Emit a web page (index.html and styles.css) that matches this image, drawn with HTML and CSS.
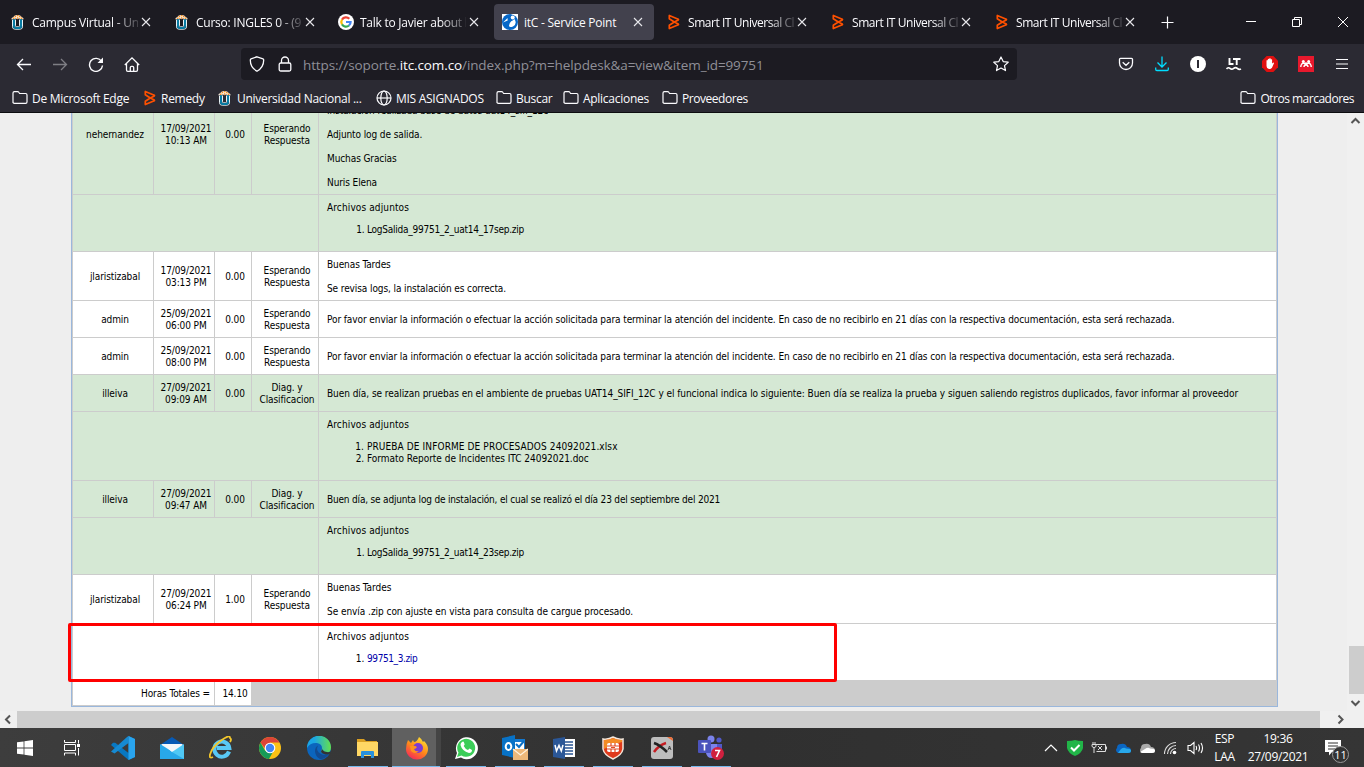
FILE: index.html
```html
<!DOCTYPE html>
<html lang="es">
<head>
<meta charset="utf-8">
<title>itC - Service Point</title>
<link rel="stylesheet" href="styles.css">
</head>
<body>
<svg class="defs" width="0" height="0">
  <symbol id="unad" viewBox="0 0 16 16"><path d="M2.500 5.500v7.300q0 2.400 2.700 2.400h4.600q2.700 0 2.700-2.400V5.500M5.500 5.500v6.300q0 1 1 1h2q1 0 1-1V5.500" fill="none" stroke="#e8f3f7"/><path d="M4 5v7.300q0 1.700 1.800 1.700h3.400q1.800 0 1.800-1.700V5" fill="none" stroke="#087ba3" stroke-width="2"/><path d="M1.300 5.600q0-1.800 1.700-2.300Q4.500 1 7.500 1T12 3.300q1.700.5 1.700 2.300-1.500-1.500-3-.4-1.500-1.200-3.200 0-1.700-1.200-3.200 0-1.500-1.100-3 .4z" fill="#fff1df"/><path d="M3 4.300h1.500M4.700 2.500h1.500M7 1.600h1.500M9 2.600h1.500M10.700 4.300h1.500M7 4h1.300" stroke="#f28a1e" stroke-width="1.400"/></symbol>
  <symbol id="bmc" viewBox="0 0 16 16"><path d="M3.300 1.500v3.200L8.300 8 12.300 6q.4-.4 0-.8zM3.300 14.500v-3.200L8.300 8l4 2q.4.400 0 .8z" fill="none" stroke="#fe5000" stroke-width="1.700" stroke-linejoin="round"/></symbol>
  <symbol id="folder" viewBox="0 0 16 16"><path d="M1 13V3q0-1.400 1.400-1.400h3.200q.8 0 1.200.7L7.600 3.500h6q1.400 0 1.400 1.400V12q0 1.400-1.400 1.400H2.400Q1 13.400 1 12z" fill="none" stroke="#fbfbfe" stroke-width="1.200"/></symbol>
  <symbol id="x" viewBox="0 0 16 16"><path d="M4 4l8 8M12 4l-8 8" stroke="#e8e8ec" stroke-width="1.100"/></symbol>
</svg>

<header class="tabs">
  <div class="tab"><svg class="i16"><use href="#unad"/></svg><span class="label">Campus Virtual - Un</span><svg class="i16 close"><use href="#x"/></svg></div>
  <div class="tab"><svg class="i16"><use href="#unad"/></svg><span class="label">Curso: INGLES 0 - (9</span><svg class="i16 close"><use href="#x"/></svg></div>
  <div class="tab"><svg class="i16" viewBox="0 0 16 16"><circle cx="8" cy="8" r="8" fill="#fff"/><g fill="none" stroke-width="2.200"><path d="M4 5.600A4.600 4.600 0 0 1 11.300 4.800" stroke="#ea4335"/><path d="M4 10.400A4.600 4.600 0 0 1 4 5.600" stroke="#fbbc05"/><path d="M4 10.400A4.600 4.600 0 0 0 11 11.500" stroke="#34a853"/><path d="M8 8h4.600q0 2-1.600 3.500" stroke="#4285f4"/></g></svg><span class="label">Talk to Javier about h</span><svg class="i16 close"><use href="#x"/></svg></div>
  <div class="tab active"><svg class="i16" viewBox="0 0 16 16"><path fill="#fff" d="M0 0h16v16H0z"/><circle cx="8" cy="8" r="8" fill="#0768c8"/><circle cx="10.700" cy="3.500" r="2" fill="#fff"/><path d="M12.500 5q3 5-1.500 7.500-4 1.500-4-1 0-2 2.200-4.200Q10.500 6.700 12.500 5zM5.500 4L1 8.500 5.700 6.500z" fill="#fff"/><path d="M9 0h7v3z" fill="#fff"/></svg><span class="label">itC - Service Point</span><svg class="i16 close"><use href="#x"/></svg></div>
  <div class="tab"><svg class="i16"><use href="#bmc"/></svg><span class="label smart">Smart IT Universal Cl</span><svg class="i16 close"><use href="#x"/></svg></div>
  <div class="tab"><svg class="i16"><use href="#bmc"/></svg><span class="label smart">Smart IT Universal Cl</span><svg class="i16 close"><use href="#x"/></svg></div>
  <div class="tab"><svg class="i16"><use href="#bmc"/></svg><span class="label smart">Smart IT Universal Cl</span><svg class="i16 close"><use href="#x"/></svg></div>
  <svg class="newtab" width="16" height="16" viewBox="0 0 16 16"><path d="M8.500 2.500v12M2.500 8.500h12" stroke="#fbfbfe" stroke-width="1.200"/></svg>
  <div class="winbtns">
    <svg width="46" height="44"><path d="M20 21.500h10" stroke="#fff"/></svg>
    <svg width="46" height="44"><path d="M20.500 19.500h7v7h-7zM22.500 19v-1.500h7v7H28" fill="none" stroke="#fff"/></svg>
    <svg width="46" height="44"><path d="M20 17l10 10M30 17L20 27" stroke="#fff"/></svg>
  </div>
</header>

<nav class="toolbar">
  <div class="nav">
    <svg class="i16" viewBox="0 0 16 16"><path d="M15 8.500H1.500M7 3L1.500 8.500 7 14" fill="none" stroke="#fbfbfe" stroke-width="1.300"/></svg>
    <svg class="i16 dim" viewBox="0 0 16 16"><path d="M1 8.500h13.500M9 3l5.500 5.500L9 14" fill="none" stroke="#fbfbfe" stroke-width="1.300"/></svg>
    <svg class="i16" viewBox="0 0 16 16"><path d="M13.600 5.500A6.500 6.500 0 1 0 14.500 9.500" fill="none" stroke="#fbfbfe" stroke-width="1.400"/><path d="M15 1.500V7H9.500z" fill="#fbfbfe"/></svg>
    <svg class="i16" viewBox="0 0 16 16"><path d="M.8 9L8 1.800 15.200 9M2.500 7.500V14q0 1.300 1.300 1.300h8.400q1.300 0 1.300-1.300V7.500M6.300 15v-3.500q0-1.200 1.200-1.200h1q1.200 0 1.200 1.200V15" fill="none" stroke="#fbfbfe" stroke-width="1.300"/></svg>
  </div>
  <div class="url">
    <svg class="i16" viewBox="0 0 16 16"><path d="M8 .8l6 2q.7.300.7 1.200 0 7.500-6.700 11.200Q1.300 11.500 1.300 4q0-.9.700-1.200z" fill="none" stroke="#fbfbfe" stroke-width="1.300"/></svg>
    <svg class="i16 lock" viewBox="0 0 16 16"><rect x="2.200" y="7" width="11.600" height="8" rx="1.500" fill="none" stroke="#fbfbfe" stroke-width="1.300"/><path d="M4.500 7V4.500a3.500 3.500 0 0 1 7 0V7" fill="none" stroke="#fbfbfe" stroke-width="1.300"/></svg>
    <span class="address">https://soporte.<b>itc.com.co</b>/index.php?m=helpdesk&amp;a=view&amp;item_id=99751</span>
    <svg class="i16 star" viewBox="0 0 16 16"><path d="M8 1l2.200 4.600 5 .6-3.700 3.400 1 5L8 12.100 3.500 14.600l1-5L.8 6.200l5-.6z" fill="none" stroke="#fbfbfe" stroke-width="1.200" stroke-linejoin="round"/></svg>
  </div>
  <div class="ext">
    <svg class="i16" viewBox="0 0 16 16"><path d="M1.500 3.300q0-1 1-1h11q1 0 1 1V7a6.500 6.500 0 0 1-13 0zM4.700 6.300L8 9.300l3.300-3" fill="none" stroke="#fbfbfe" stroke-width="1.300"/></svg>
    <svg class="i16" viewBox="0 0 16 16"><path d="M8 .5v10.500M3.500 6.500L8 11l4.500-4.500M1.700 11.500v1.800q0 1.200 1.200 1.200h10.200q1.200 0 1.200-1.200v-1.800" fill="none" stroke="#00ddff" stroke-width="1.300"/></svg>
    <svg class="i16" viewBox="0 0 16 16"><circle cx="8" cy="8" r="8" fill="#fff"/><path d="M8 4v8" stroke="#2b2a33" stroke-width="2"/></svg>
    <svg class="i16" viewBox="0 0 16 16"><path d="M3.500 2v6H7.500M7 3h7.500M10.700 3v6" fill="none" stroke="#fff" stroke-width="1.900"/><path d="M.5 13q1.700-2.200 3.500-.6t3.700 0 3.600 0 3.700.6" fill="none" stroke="#fff" stroke-width="1.700"/></svg>
    <svg class="i16" viewBox="0 0 16 16"><path d="M4.700 0h6.600L16 4.700v6.600L11.300 16H4.700L0 11.300V4.700z" fill="#e01010"/><path d="M4.500 8V4.500q.8-.9 1.300 0V3.300q.8-.9 1.400 0v-.7q.8-.8 1.500 0v1q.8-.8 1.400 0v4l1-.9q1-.3 1 .4l-2.100 4.700q-1 1.400-3 1.200-2.500-.3-2.500-3z" fill="#fff"/></svg>
    <svg class="i16" viewBox="0 0 16 16"><path fill="#e8192d" d="M0 0h16v16H0z"/><path d="M2.800 11q0-1.500.6-2.500Q4 7.300 5.300 7L8 8l2.700-1q1.300.3 1.900 1.500.6 1 .6 2.500M6 11q0-2 2-2t2 2" fill="none" stroke="#fff" stroke-width="1.400"/><circle cx="5.300" cy="5.500" r="1.500" fill="#fff"/><circle cx="10.700" cy="5.500" r="1.500" fill="#fff"/><circle cx="8" cy="7.700" r="1.500" fill="#fff"/></svg>
    <svg class="i16" viewBox="0 0 16 16"><path d="M2 3.500h12M2 8h12M2 12.500h12" stroke="#fbfbfe" stroke-width="1.200"/></svg>
  </div>
</nav>

<nav class="bookmarks">
  <div class="bm w131"><svg class="i16"><use href="#folder"/></svg><span>De Microsoft Edge</span></div>
  <div class="bm w76"><svg class="i16"><use href="#bmc"/></svg><span>Remedy</span></div>
  <div class="bm w159"><svg class="i16"><use href="#unad"/></svg><span class="uni">Universidad Nacional ...</span></div>
  <div class="bm w120"><svg class="i16" viewBox="0 0 16 16"><g fill="none" stroke="#fbfbfe" stroke-width="1.200"><circle cx="8" cy="8" r="7"/><ellipse cx="8" cy="8" rx="3.200" ry="7"/><path d="M1 8h14"/></g></svg><span class="mis">MIS ASIGNADOS</span></div>
  <div class="bm w67"><svg class="i16"><use href="#folder"/></svg><span>Buscar</span></div>
  <div class="bm w99"><svg class="i16"><use href="#folder"/></svg><span>Aplicaciones</span></div>
  <div class="bm"><svg class="i16"><use href="#folder"/></svg><span class="tight">Proveedores</span></div>
  <div class="bm last"><svg class="i16"><use href="#folder"/></svg><span class="tighter">Otros marcadores</span></div>
</nav>

<main class="view">
  <div class="page">
    <div class="log">
      <div class="row green first"><div>nehernandez</div><div>17/09/2021<br>10:13 AM</div><div>0.00</div><div>Esperando<br>Respuesta</div><div class="msg">Instalacion realizada base de datos uat14_sifi_12c<br><br>Adjunto log de salida.<br><br>Muchas Gracias<br><br>Nuris Elena</div></div>
      <div class="row files green h56"><div></div><div class="att"><span class="head">Archivos adjuntos</span><ol><li class="log-name">LogSalida_99751_2_uat14_17sep.zip</li></ol></div></div>
      <div class="row h48"><div>jlaristizabal</div><div>17/09/2021<br>03:13 PM</div><div>0.00</div><div>Esperando<br>Respuesta</div><div class="msg">Buenas Tardes<br><br>Se revisa logs, la instalación es correcta.</div></div>
      <div class="row h36"><div>admin</div><div>25/09/2021<br>06:00 PM</div><div>0.00</div><div>Esperando<br>Respuesta</div><div class="msg notice">Por favor enviar la información o efectuar la acción solicitada para terminar la atención del incidente. En caso de no recibirlo en 21 días con la respectiva documentación, esta será rechazada.</div></div>
      <div class="row h36"><div>admin</div><div>25/09/2021<br>08:00 PM</div><div>0.00</div><div>Esperando<br>Respuesta</div><div class="msg notice">Por favor enviar la información o efectuar la acción solicitada para terminar la atención del incidente. En caso de no recibirlo en 21 días con la respectiva documentación, esta será rechazada.</div></div>
      <div class="row green h36"><div>illeiva</div><div>27/09/2021<br>09:09 AM</div><div>0.00</div><div>Diag. y<br>Clasificacion</div><div class="msg report">Buen día, se realizan pruebas en el ambiente de pruebas UAT14_SIFI_12C y el funcional indica lo siguiente: Buen día se realiza la prueba y siguen saliendo registros duplicados, favor informar al proveedor</div></div>
      <div class="row files green h68"><div></div><div class="att"><span class="head">Archivos adjuntos</span><ol><li class="caps">PRUEBA DE INFORME DE PROCESADOS 24092021.xlsx</li><li class="doc">Formato Reporte de Incidentes ITC 24092021.doc</li></ol></div></div>
      <div class="row green h36"><div>illeiva</div><div>27/09/2021<br>09:47 AM</div><div>0.00</div><div>Diag. y<br>Clasificacion</div><div class="msg install">Buen día, se adjunta log de instalación, el cual se realizó el día 23 del septiembre del 2021</div></div>
      <div class="row files green h56"><div></div><div class="att"><span class="head">Archivos adjuntos</span><ol><li class="log-name">LogSalida_99751_2_uat14_23sep.zip</li></ol></div></div>
      <div class="row h48"><div>jlaristizabal</div><div>27/09/2021<br>06:24 PM</div><div>1.00</div><div>Esperando<br>Respuesta</div><div class="msg sent">Buenas Tardes<br><br>Se envía .zip con ajuste en vista para consulta de cargue procesado.</div></div>
      <div class="row files h56"><div></div><div class="att"><span class="head">Archivos adjuntos</span><ol><li><a>99751_3.zip</a></li></ol></div></div>
      <div class="row total"><div>Horas Totales =</div><div>14.10</div></div>
    </div>
    <div class="mark"></div>
  </div>
  <div class="vscroll"><svg width="17" height="17"><path d="M4.500 10L8.500 6l4 4" fill="none" stroke="#555" stroke-width="2"/></svg><i></i><svg width="17" height="17"><path d="M4.500 7l4 4 4-4" fill="none" stroke="#555" stroke-width="2"/></svg></div>
  <div class="hscroll"><svg width="17" height="17"><path d="M10 4.500L6 8.500l4 4" fill="none" stroke="#555" stroke-width="2"/></svg><i></i><svg width="44" height="17"><path d="M18.500 4.500l4 4-4 4" fill="none" stroke="#555" stroke-width="2"/></svg></div>
</main>

<footer class="taskbar">
  <div class="app"><svg width="16" height="16" viewBox="0 0 16 16"><path d="M0 2.300l6.600-.9v6.200H0zM7.400 1.300L16 0v7.600H7.400zM0 8.400h6.600v6.200L0 13.700zM7.400 8.400H16V16l-8.600-1.300z" fill="#fff"/></svg></div>
  <div class="app view-btn"><svg width="16" height="16" viewBox="0 0 16 16"><path d="M.5 0v2.500h11V0M.5 15.500V13h11v2.500M.5 4.500h11v6H.500zM14.500 0v3.500M14.500 8v7.500" fill="none" stroke="#fff"/><path d="M13 4h3v3h-3z" fill="#fff"/></svg></div>
  <div class="app"><svg width="24" height="24" viewBox="0 0 24 24"><path d="M17.500 0L24 3v18l-6.500 3L0 9l2-2.200 2.200-.1L17.500 17z" fill="#0878c2"/><path d="M17.500 0v7L3.500 17.500 0 15.500 16 1z" fill="#168ad2"/><path d="M17.500 0L24 3v18l-6.500 3z" fill="#29a4ee"/></svg></div>
  <div class="app"><svg width="24" height="24" viewBox="0 0 24 24"><path d="M0 9L12 1l12 8v14H0z" fill="#075ab5"/><path d="M1.500 8h21v10h-21z" fill="#f4f7fa"/><path d="M0 9l12 8 12-8v14H0z" fill="#35b3ee"/><path d="M0 8v15h24z" fill="#28a8ea"/><path d="M3 8h18l-9 8z" fill="#f4f7fa"/><path d="M24 8v15L12 16z" fill="#50c8f5"/></svg></div>
  <div class="app"><svg width="24" height="24" viewBox="0 0 24 24"><path d="M20 15.500A7.500 7.500 0 1 1 20.300 12H8" fill="none" stroke="#59c9f5" stroke-width="4"/><path d="M4 21q-4 2-3-2.500Q3 11 12 4.500T21 2q2 1 0 4" fill="none" stroke="#f3c72b" stroke-width="1.800"/></svg></div>
  <div class="app"><svg width="24" height="24" viewBox="0 0 24 24"><circle cx="12" cy="12" r="11" fill="#fbc116"/><path d="M2.500 6.500A11 11 0 0 1 21.500 6.500H12L8 14z" fill="#dc4437"/><path d="M2.500 6.500A11 11 0 0 0 11 23l5-9-4 2.500-5-2z" fill="#169b58"/><circle cx="12" cy="12" r="5.300" fill="#fff"/><circle cx="12" cy="12" r="4.200" fill="#4285f4"/></svg></div>
  <div class="app"><svg width="24" height="24" viewBox="0 0 24 24"><defs><linearGradient id="eg"><stop offset=".3" stop-color="#1ba6e4"/><stop offset="1" stop-color="#64e04d"/></linearGradient></defs><circle cx="12" cy="12" r="12" fill="#0b65bd"/><path d="M0 12A12 12 0 0 1 24 11.500Q24 17 18 17q-4 0-4-1.500c0-1 1-1 1-3.500q0-4-5-5Q3 6.500 0 12z" fill="url(#eg)"/><path d="M11 9.500Q8 15 14 18q4 2 8 0-4 5.500-9 5-5-3-5-8 0-4 3-5.500z" fill="#124b91"/><path d="M14 15.500c0-1 1-1 1-3 0 2 5 5 9 3l-1.500 2.500q-3 1-5.500 0-3-1-3-2.500z" fill="#333"/></svg></div>
  <div class="app run"><svg width="24" height="24" viewBox="0 0 24 24"><path d="M1 3h7l2 2h11v6H1z" fill="#dba022"/><path d="M1 6h21v14H1z" fill="#ffd764"/><path d="M5 22v-6q0-1 1-1h11q1 0 1 1v6h-3v-3H8v3z" fill="#2991dd"/></svg></div>
  <div class="app run on"><svg width="24" height="24" viewBox="0 0 24 24"><defs><linearGradient id="ff" x1=".8" y1="0" x2=".2" y2="1"><stop offset="0" stop-color="#ffe635"/><stop offset=".5" stop-color="#ff8a18"/><stop offset="1" stop-color="#f4215f"/></linearGradient></defs><path d="M3 4l3 3 2-3 1 2q3 0 5-5 3 2 4 5l1-1q4 4 4 8a11 10.500 0 0 1-22 0q0-5 2-9z" fill="url(#ff)"/><circle cx="13" cy="12" r="5" fill="#7d3bd2"/><path d="M5 10q5-1 7 1-1 2-3 2 1 3 5 2-4 4-8 0z" fill="#ff921e"/></svg></div>
  <div class="app run"><svg width="24" height="24" viewBox="0 0 24 24"><path d="M1 23l2-6a11 11 0 1 1 4 4.500z" fill="#fff"/><path d="M3 21l1.500-4.500a9 9 0 1 1 3 3z" fill="#3bcd58"/><path d="M8 6q1.500-1 2 .5l.7 2-1 1.500q1.500 3 4.300 4l1.500-1.500 2.500 1.500q0 3-3 3-7-2-8.500-8Q6.500 7 8 6z" fill="#fff"/></svg></div>
  <div class="app run"><svg width="26" height="26" viewBox="0 0 26 26"><path d="M12 4h11v14H12z" fill="#1478ce"/><path d="M13 7h9v8h-9z" fill="#fff"/><path d="M14 9l3 3 5-6" stroke="#0b6fc4" stroke-width="2" fill="none"/><path d="M0 3l13-3v23L0 20z" fill="#0872c6"/><ellipse cx="6.500" cy="11.500" rx="2.800" ry="3.500" fill="none" stroke="#fff" stroke-width="2"/><path d="M11 14h15v11H11z" fill="#edb879"/><path d="M11 14l7.500 6 7.500-6" fill="none" stroke="#fff3df" stroke-width="1.200"/></svg></div>
  <div class="app run"><svg width="24" height="24" viewBox="0 0 24 24"><path d="M11 3h12v18H11z" fill="#fff"/><path d="M13 6h8m-8 3h8m-8 3h8m-8 3h8m-8 3h8" stroke="#285493" stroke-width="1.300"/><path d="M1 3l12-2v22L1 21z" fill="#2b5797"/><path d="M3 9l1.500 6L7 9.500 9.300 15 11 9" stroke="#fff" stroke-width="1.500" fill="none"/></svg></div>
  <div class="app run"><svg width="24" height="24" viewBox="0 0 24 24"><path d="M2 3q5 1 10-2 5 3 10 2v10q-1 6-10 10Q3 19 2 13z" fill="#df3a1c" stroke="#f4e8dc" stroke-width="1.500"/><path d="M3 4q5 0 9-2 4 2 9 2v2Q12 8 3 13z" fill="#f38b24"/><rect x="6" y="7" width="12" height="9" rx="2" fill="#fff"/><path d="M10 7v3m4-3v3M10 13v3m4-3v3M6 10h12M6 13h12M10 11.500h4" stroke="#e24b24" stroke-width="1.200"/></svg></div>
  <div class="app run"><svg width="24" height="24" viewBox="0 0 24 24"><rect x="1" y="1" width="22" height="22" rx="3" fill="#bdbdbd"/><path d="M17 1h3q3 0 3 4z" fill="#f06b32"/><path d="M16 7Q9 9 4 16" stroke="#c51c22" stroke-width="2.500" fill="none"/><path d="M4 7q6 2 13 9" stroke="#222" stroke-width="2.500" fill="none"/><path d="M18 14l1.500-4 1.500 4m-2.500-1.500h2" stroke="#444" fill="none"/></svg></div>
  <div class="app run"><svg width="26" height="26" viewBox="0 0 26 26"><circle cx="13" cy="4" r="3.500" fill="#7b83eb"/><circle cx="21" cy="5" r="2.600" fill="#5059c9"/><path d="M16 9h8v7q-1 4-5 4z" fill="#5059c9"/><path d="M8 9h11v9q-1 5-5.500 5T8 18z" fill="#7b83eb"/><rect y="5" width="13" height="13" rx="1" fill="#4b53bc"/><path d="M3.500 8.500h6M6.500 8.500v7" stroke="#fff" stroke-width="1.600"/><circle cx="19.500" cy="18.500" r="6.500" fill="#d0203f"/><path d="M17 15.500h4.500L18.500 22" stroke="#fff" stroke-width="1.600" fill="none"/></svg></div>
  <div class="tray">
    <svg width="16" height="16" viewBox="0 0 16 16"><path d="M2 11l6-6 6 6" fill="none" stroke="#fff" stroke-width="1.200"/></svg>
    <svg width="16" height="16" viewBox="0 0 16 16"><path d="M0 1q5 0 8-1 3 1 8 1v7q-1 5-8 8Q1 13 0 8z" fill="#21b548"/><path d="M4 7.500l3 3 5.500-5.500" fill="none" stroke="#fff" stroke-width="2"/></svg>
    <svg width="16" height="16" viewBox="0 0 16 16"><path d="M5 4.500h9.500v7H5.500M15.500 6.500v3M1 4.500h4v2q-2 2.500-4 0zM2 2v2m2-2v2M3 8v5M7 6l4 4m0-4l-4 4" fill="none" stroke="#ddd"/></svg>
    <svg width="16" height="16" viewBox="0 0 16 16"><path d="M3 13a3 3 0 0 1-1-5 4 4 0 0 1 4-4 5 5 0 0 1 6 3q4 0 4 3.500 0 2.500-3 2.500z" fill="#0a66c2"/><path d="M3 13l3-4q3-2 5-.5 5 0 5 2 0 2.500-3 2.500z" fill="#28a8ea"/></svg>
    <svg width="16" height="16" viewBox="0 0 16 16"><path d="M3 13a3 3 0 0 1-1-5 4 4 0 0 1 4-4 5 5 0 0 1 6 3q4 0 4 3.500 0 2.500-3 2.500z" fill="#aaa"/><path d="M1 12l5-3q3-2 5-.5 5 0 5 2 0 2.500-3 2.500H3z" fill="#fff"/></svg>
    <svg width="16" height="16" viewBox="0 0 16 16"><g fill="none" stroke="#ddd" stroke-width="1.100"><path d="M1.500 14A11.500 11.500 0 0 1 13 2.500M4.500 14A8.500 8.500 0 0 1 13 5.500M7.500 14A5.500 5.500 0 0 1 13 8.500"/></g><circle cx="11.500" cy="12.500" r="1.800" fill="#fff"/></svg>
    <svg width="17" height="16" viewBox="0 0 17 16"><path d="M1 5.500h2.500L7 2.500v11L3.500 10.500H1zM9 6q1.200 2 0 4M11.500 4.500q2 3.500 0 7M14 3q3 5 0 10" fill="none" stroke="#fff" stroke-width="1.100"/></svg>
  </div>
  <div class="lang">ESP<br>LAA</div>
  <div class="clock">19:36<br>27/09/2021</div>
  <div class="notes"><svg width="16" height="16" viewBox="0 0 16 16"><path d="M0 0h16v12H7l-3 3.500V12H0z" fill="#fff"/><path d="M3 3h10M3 6h10M3 9h7" stroke="#333"/></svg><span>11</span></div>
</footer>
</body>
</html>
```
FILE: styles.css
```css
* { box-sizing: border-box; }
body { margin: 0; width: 1364px; height: 767px; overflow: hidden; background: #eee; font-family: "Open Sans", "Noto Sans", sans-serif; font-size: 12px; color: #000; display: flex; flex-direction: column; }
svg { display: block; flex: none; }
.defs { position: absolute; }
.i16 { width: 16px; height: 16px; }

.tabs { height: 44px; flex: none; background: #1c1b22; display: flex; gap: 4px; padding: 4px 0 4px 2px; color: #fbfbfe; }
.tab { width: 160px; height: 36px; padding: 0 8px; display: flex; align-items: center; border-radius: 4px; flex: none; }
.tab.active { background: #42414d; }
.label { width: 106px; margin-left: 6px; white-space: nowrap; font-size: 12px; letter-spacing: -0.25px; mask-image: linear-gradient(90deg, #000 80px, transparent 112px); }
.smart { letter-spacing: -0.45px; }
.active .label { mask-image: none; }
.newtab { margin: 10px 0 0 9px; }
.winbtns { margin: -4px 0 -4px auto; display: flex; height: 44px; }

.toolbar { height: 40px; flex: none; background: #2b2a33; display: flex; align-items: center; }
.nav { display: flex; gap: 20px; padding-left: 16px; width: 241px; }
.dim { opacity: .4; }
.url { width: 776px; height: 32px; background: #1c1b22; border-radius: 4px; display: flex; align-items: center; padding: 0 8px; }
.lock { margin: 0 10px 0 12px; }
.address { flex: 1; padding-top: 2px; font-size: 13.500px; color: #8f8f97; white-space: nowrap; letter-spacing: -0.110px; }
.address b { font-weight: 400; color: #fbfbfe; }
.ext { flex: 1; display: flex; gap: 20px; justify-content: flex-end; padding-right: 14px; }

.bookmarks { height: 29px; flex: none; background: #2b2a33; border-bottom: 1px solid #0c0c0f; display: flex; align-items: center; padding: 0 10px 0 12px; color: #fbfbfe; }
.bm { display: flex; gap: 4px; align-items: center; white-space: nowrap; letter-spacing: -0.28px; }
.tight { letter-spacing: -0.45px; }
.tighter { letter-spacing: -0.5px; }
.w131 { width: 130px; } .w76 { width: 75px; } .w159 { width: 159px; } .w120 { width: 120px; } .w67 { width: 67px; } .w99 { width: 99px; }
.w76 { gap: 3px; }
.last { margin-left: auto; }

.view { height: 615px; flex: none; display: grid; grid-template: 598px 17px / 1347px 17px; background: #f0f0f0; }
.page { position: relative; overflow: hidden; background: #eee; padding-left: 71px; }
.log { width: 1207px; border: 1px solid #9ab7dc; border-top: 0; background: #ccc; padding: 0 1px 1px; display: flex; flex-direction: column; gap: 1px; font: 10px/12px "DejaVu Sans Condensed", "DejaVu Sans", sans-serif; font-stretch: condensed; letter-spacing: -0.100px; }
.row { display: grid; grid-template-columns: 80px 60px 36px 66px 957px; grid-template-rows: 100%; gap: 1px; text-align: center; }
.row > div { background: #fff; display: flex; align-items: center; justify-content: center; padding: 2px 0 0 4px; white-space: nowrap; }
.row.green > div { background: #d5e8d4; }
.row.files { grid-template-columns: 245px 957px; }
.row > .msg { justify-content: flex-start; text-align: left; padding-left: 8px; }
.row > .att { display: block; text-align: left; padding: 7px 8px 0; }
.head { letter-spacing: 0.12px; }
.att ol { margin: 10px 0 0; padding-left: 40px; }
.att a { color: #00a; letter-spacing: -0.4px; }
.log-name { letter-spacing: -0.25px; }
.caps { letter-spacing: 0.100px; }
.doc { letter-spacing: -0.030px; }
.notice { letter-spacing: -0.085px; }
.report { letter-spacing: -0.052px; }
.install { letter-spacing: -0.186px; }
.sent { letter-spacing: -0.050px; }
.first { height: 81px; overflow: hidden; }
.row.first > div { padding-top: 0; padding-bottom: 37px; }
.row.first > .msg { align-items: flex-end; padding-bottom: 5px; }
.h36 { height: 36px; } .h48 { height: 48px; } .h56 { height: 56px; } .h68 { height: 68px; }
.row.total { height: 24px; grid-template-columns: 141px 36px; }
.total > div:first-child { justify-content: flex-end; padding-right: 4px; }
.mark { position: absolute; left: 68px; top: 510px; width: 769px; height: 59px; border: 3px solid #f00; border-radius: 2px; }
.vscroll { display: flex; flex-direction: column; background: #f0f0f0; }
.vscroll i { width: 15px; height: 48px; margin: 516px 0 0 2px; background: #cdcdcd; }
.hscroll { grid-column: 1 / 3; display: flex; background: #f0f0f0; }
.hscroll i { width: 1303px; background: #cdcdcd; }

.taskbar { height: 39px; flex: none; display: flex; background: linear-gradient(90deg, #3d3d3d, #303030 55%, #353535); color: #fff; }
.app { width: 49.050px; flex: none; display: flex; align-items: center; justify-content: center; }
.app.view-btn { padding-right: 3px; }
.app.run { background: linear-gradient(#76b9ed, #76b9ed) 50% 100% / 40px 1px no-repeat; }
.app.on { background: linear-gradient(#76b9ed, #76b9ed) 0 100% / 48px 1px no-repeat, linear-gradient(90deg, #606060 44px, #444 44px); }
.tray { margin-left: auto; display: flex; gap: 8px; align-items: center; }
.lang, .clock { line-height: 18px; padding-top: 2px; text-align: center; letter-spacing: -0.3px; }
.lang { width: 40px; padding-left: 1px; }
.clock { width: 66px; padding-left: 2px; white-space: nowrap; }
.notes { width: 54px; padding: 12px 0 0 15px; position: relative; }
.notes span { position: absolute; left: 22px; top: 18px; width: 17px; height: 17px; border: 1px solid #999; border-radius: 50%; background: #333; font-size: 11px; line-height: 15px; text-align: center; }
```
